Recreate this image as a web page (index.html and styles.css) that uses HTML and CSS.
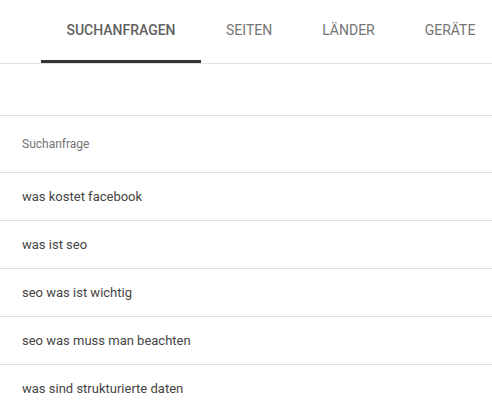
FILE: index.html
```html
<!DOCTYPE html>
<html lang="de">
<head>
<meta charset="utf-8">
<title>Suchanfragen</title>
<link rel="stylesheet" href="styles.css">
</head>
<body>
<nav class="tabs">
  <div class="tab active">SUCHANFRAGEN</div>
  <div class="tab">SEITEN</div>
  <div class="tab">LÄNDER</div>
  <div class="tab">GERÄTE</div>
</nav>
<div class="spacer"></div>
<div class="table">
  <div class="head">Suchanfrage</div>
  <div class="row">was kostet facebook</div>
  <div class="row">was ist seo</div>
  <div class="row">seo was ist wichtig</div>
  <div class="row">seo was muss man beachten</div>
  <div class="row">was sind strukturierte daten</div>
</div>
</body>
</html>
```

FILE: styles.css
```css
html, body {
  margin: 0;
  padding: 0;
  background: #fff;
  font-family: Roboto, "Liberation Sans", sans-serif;
  overflow: hidden;
}
.tabs {
  display: flex;
  height: 63px;
  padding-left: 41px;
  border-bottom: 1px solid #e0e0e0;
  white-space: nowrap;
}
.tab {
  display: flex;
  align-items: center;
  justify-content: center;
  padding: 0 25px;
  font-size: 14px;
  color: #757575;
  box-sizing: border-box;
  border-bottom: 3px solid transparent;
}
.tab.active {
  min-width: 160px;
  font-weight: 500;
  color: #616161;
  border-bottom-color: #333;
}
.spacer {
  height: 51px;
  border-bottom: 1px solid #e0e0e0;
}
.head {
  height: 57px;
  box-sizing: border-box;
  display: flex;
  align-items: center;
  padding-left: 22px;
  font-size: 12px;
  color: #757575;
  border-bottom: 1px solid #e0e0e0;
}
.row {
  height: 48px;
  box-sizing: border-box;
  display: flex;
  align-items: center;
  padding: 0 0 1px 22px;
  font-size: 13px;
  color: #444;
  border-bottom: 1px solid #e0e0e0;
}
```
